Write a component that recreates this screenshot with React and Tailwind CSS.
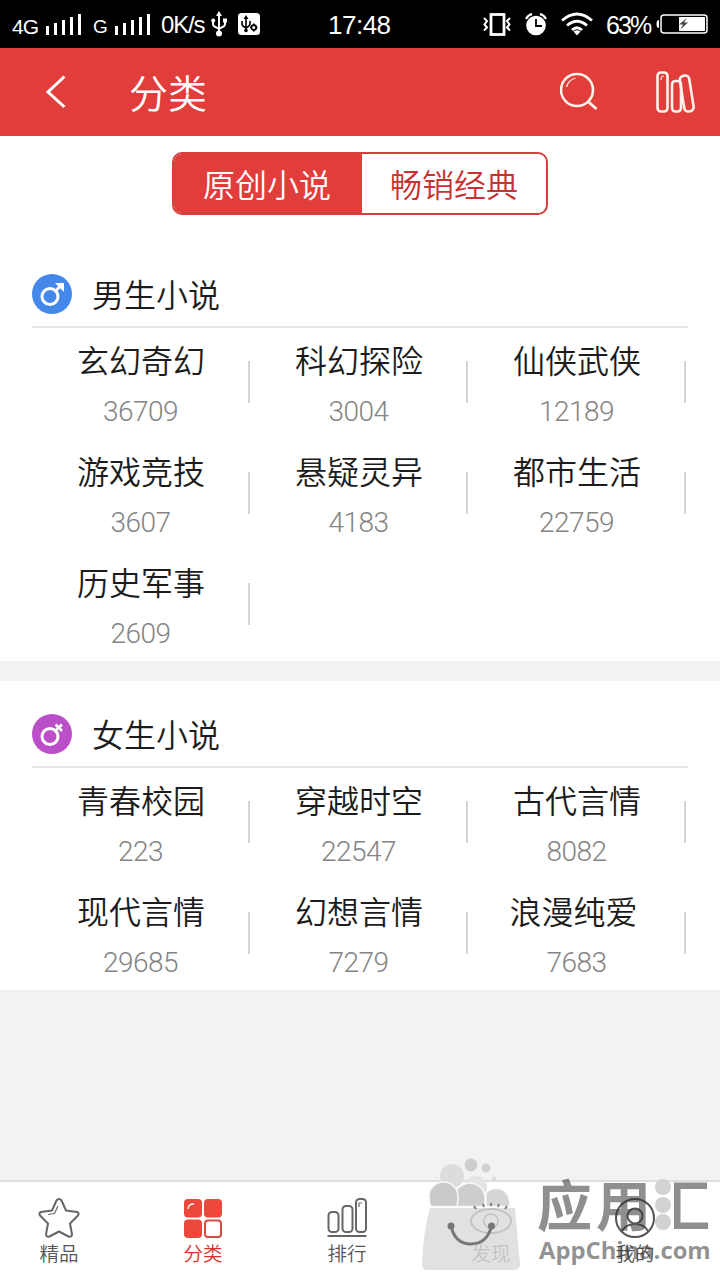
import React from "react";

const sections = [
  {
    title: "男生小说",
    gender: "male",
    items: [
      { name: "玄幻奇幻", count: 36709 },
      { name: "科幻探险", count: 3004 },
      { name: "仙侠武侠", count: 12189 },
      { name: "游戏竞技", count: 3607 },
      { name: "悬疑灵异", count: 4183 },
      { name: "都市生活", count: 22759 },
      { name: "历史军事", count: 2609 },
    ],
  },
  {
    title: "女生小说",
    gender: "female",
    items: [
      { name: "青春校园", count: 223 },
      { name: "穿越时空", count: 22547 },
      { name: "古代言情", count: 8082 },
      { name: "现代言情", count: 29685 },
      { name: "幻想言情", count: 7279 },
      { name: "浪漫纯爱 ", count: 7683 },
    ],
  },
];

const SignalBars = () => (
  <svg width="37" height="22" viewBox="0 0 37 22" fill="#fff">
    <rect x="1" y="13" width="3" height="9" />
    <rect x="9" y="10" width="3" height="12" />
    <rect x="17" y="7" width="3" height="15" />
    <rect x="25" y="4" width="3" height="18" />
    <rect x="33" y="1" width="3" height="21" />
  </svg>
);

const UsbIcon = () => (
  <svg width="16" height="26" viewBox="0 0 16 26" fill="none" stroke="#fff" strokeWidth="2">
    <path d="M8 4v18M2 10v3q0 2 2.500 3L8 18M14 9v4q0 2-2.500 3L8 18" />
    <path d="M8 0l3 5H5z" fill="#fff" stroke="none" />
    <circle cx="2.200" cy="9.500" r="2" fill="#fff" stroke="none" />
    <rect x="12" y="7.500" width="4" height="4" fill="#fff" stroke="none" />
    <circle cx="8" cy="22.500" r="3" fill="#fff" stroke="none" />
  </svg>
);

const UsbDebugIcon = () => (
  <svg width="22" height="22" viewBox="0 0 22 22" fill="none" stroke="#000" strokeWidth="1.6">
    <rect width="22" height="22" rx="3.500" fill="#fff" stroke="none" />
    <path d="M8 4v14M4 8v3q0 2 4 4M12 8v3q0 2-4 4" />
    <path d="M8 2l2.500 4h-5z" fill="#000" stroke="none" />
    <circle cx="8" cy="17.500" r="1.800" fill="#000" stroke="none" />
    <circle cx="15.800" cy="14.500" r="2.400" strokeWidth="1.800" />
    <path d="M15.800 10.500v1.500M15.800 17v1.500M12 14.500h1.500M18 14.500h1.500" />
  </svg>
);

const VibrateIcon = () => (
  <svg width="28" height="24" viewBox="0 0 28 24" fill="none" stroke="#fff">
    <rect x="8" y="2.500" width="13" height="20" strokeWidth="2.800" />
    <path d="M1 6l3 3-2.500 3.500L4 15.500l-3 3M27 6l-3 3 2.500 3.500-2.500 3 3 3" strokeWidth="2" />
  </svg>
);

const AlarmIcon = () => (
  <svg width="22" height="23" viewBox="0 0 22 23" fill="none">
    <circle cx="11" cy="12.500" r="9.800" fill="#fff" />
    <path d="M1 6q2-4 6-5M21 6q-2-4-6-5" stroke="#fff" strokeWidth="2.200" />
    <path d="M11 6v7h6" stroke="#000" strokeWidth="1.800" />
  </svg>
);

const WifiIcon = () => (
  <svg width="32" height="24" viewBox="0 0 32 24" fill="none" stroke="#fff" strokeWidth="2.800">
    <path d="M1 8.500Q16-4.500 31 8.500M6 13.500q10-8.500 20 0M11 18q5-4.500 10 0" />
    <path d="M16 23.500l-3.500-4q3.500-2.500 7 0z" fill="#fff" stroke="none" />
  </svg>
);

const BatteryIcon = () => (
  <svg width="52" height="20" viewBox="0 0 52 20">
    <path d="M3 6v8q-2.500 0-2.500-4T3 6z" fill="#fff" />
    <rect x="5" y="1" width="46" height="18" rx="3" fill="none" stroke="#fff" strokeWidth="1.500" />
    <rect x="23" y="3" width="26" height="14" fill="#fff" />
    <path d="M31 4l-8 6.500h4l-2.500 5 7.500-7h-4z" fill="#444" />
  </svg>
);

const StatusBar = () => (
  <div className="flex h-12 items-center bg-black font-['Liberation_Sans'] text-[25px] leading-none tracking-[-0.5px] text-white">
    <div className="flex flex-1 items-center pl-3">
      <span className="w-[33px] pt-1 text-[21px] tracking-[-1px]">4G</span>
      <SignalBars />
      <span className="ml-[11px] w-[21px] pt-1 text-[19px]">G</span>
      <SignalBars />
      <span className="ml-[10px] w-[50px] whitespace-nowrap pt-0.5 text-[24px] tracking-[-1.2px]">0K/s</span>
      <UsbIcon />
      <span className="ml-[11px]">
        <UsbDebugIcon />
      </span>
    </div>
    <span className="w-[64px] whitespace-nowrap pt-0.5 text-[26px]">17:48</span>
    <div className="flex flex-1 items-center justify-end pr-3">
      <VibrateIcon />
      <span className="ml-[14px]">
        <AlarmIcon />
      </span>
      <span className="ml-[14px]">
        <WifiIcon />
      </span>
      <span className="ml-[13px] w-[50px] whitespace-nowrap pt-0.5 tracking-[-1.9px]">63%</span>
      <BatteryIcon />
    </div>
  </div>
);

const Header = () => (
  <div className="flex h-22 items-center bg-[#e03d3b] pl-[46px] pr-6 text-white">
    <svg width="20" height="34" viewBox="0 0 20 34" fill="none" stroke="#fff" strokeWidth="3">
      <path d="M18.500 1.500L2 17l16.500 15" />
    </svg>
    <h1 className="ml-[63px] flex-1 pb-px text-[39px] font-[350] leading-none">分类</h1>
    <svg width="40" height="40" viewBox="0 0 40 40" fill="none" stroke="#fff3ec" strokeWidth="2.600">
      <circle cx="17" cy="18" r="16" />
      <path d="M28 29.500l8.500 7.500" strokeWidth="3" />
      <path d="M6.500 15q2-7 9-9" strokeWidth="1.300" />
    </svg>
    <svg className="ml-[56px]" width="40" height="42" viewBox="0 0 40 42" fill="none" stroke="#fff3ec" strokeWidth="2.600">
      <rect x="1.500" y="1.500" width="10" height="39" rx="3.500" />
      <rect x="16" y="10" width="9" height="30.500" rx="3.500" />
      <rect x="26" y="4.500" width="9.500" height="36" rx="4" transform="rotate(-9 31 22.500)" />
      <path d="M5 9q0-4 3-4" strokeWidth="1.200" />
    </svg>
  </div>
);

const GenderIcon = ({ gender }) => (
  <svg width="40" height="40" viewBox="0 0 40 40" fill="none" stroke="#fff" strokeWidth="3">
    <circle cx="20" cy="20" r="20" fill={gender === "male" ? "#4489ea" : "#bb4fca"} stroke="none" />
    <circle cx="18" cy="22.500" r="8" />
    {gender === "male" ? (
      <>
        <path d="M23.500 17l5-5" />
        <path d="M23 9h9v9z" fill="#fff" stroke="none" />
      </>
    ) : (
      <path d="M23 17l7-6.500M23.500 10.500l6.500 6.500" strokeWidth="2.600" />
    )}
  </svg>
);

const CategorySection = ({ title, gender, items }) => (
  <section className="bg-white">
    <div className="mx-8 flex h-[67px] items-center border-b-2 border-[#e6e6e6]">
      <GenderIcon gender={gender} />
      <h2 className="ml-5 pb-px text-[32px] font-[350] leading-none text-[#1c1c1c]">{title}</h2>
    </div>
    <div className="ml-8 grid w-[654px] grid-cols-3">
      {items.map((item) => (
        <div key={item.name} className="flex h-[111px]">
          <div className="flex-1 pt-[11px] text-center">
            <p className="whitespace-pre pl-0.5 text-[32px] font-[350] leading-10 text-[#1c1c1c]">{item.name}</p>
            <p className="mt-[17px] pl-px font-[Roboto] text-[28px] font-light leading-8 tracking-[-0.5px] text-[#848484]">
              {item.count}
            </p>
          </div>
          <div className="mt-[33px] h-[42px] w-0.5 bg-[#d4d4d4]" />
        </div>
      ))}
    </div>
  </section>
);

const StarIcon = () => (
  <svg width="42" height="40" viewBox="0 0 42 40" fill="none" stroke="#666" strokeWidth="2" strokeLinejoin="round">
    <path d="M18.500 2.500Q21-.5 23.500 2.500L28 12.500l11 1.500q3 1.500.5 4L32 25.500l2 11q-.5 3-3.500 2L21 33.500 11.500 38.500q-3 1-3.500-2l2-11L2.500 18q-2.500-2.500.5-4l11-1.500z" />
    <path d="M20 8l-3.500 7.500-6.500 1" strokeWidth="1.200" />
  </svg>
);

const GridIcon = () => (
  <svg width="38" height="39" viewBox="0 0 38 39" fill="#ee473b">
    <rect width="18" height="18.500" rx="4" />
    <rect x="20" width="18" height="18.500" rx="4" />
    <rect y="20.500" width="18" height="18.500" rx="4" />
    <rect x="21" y="21.500" width="16" height="16.500" rx="3" fill="none" stroke="#d94a42" strokeWidth="2" />
    <path d="M4 10q0-5 6-5" fill="none" stroke="#fff" strokeWidth="1.300" />
  </svg>
);

const RankIcon = () => (
  <svg width="40" height="40" viewBox="0 0 40 40" fill="none" stroke="#666" strokeWidth="2">
    <rect x="1.500" y="14" width="10" height="20" rx="3.500" />
    <rect x="15.500" y="8" width="10" height="26" rx="3.500" />
    <rect x="29" y="1" width="10" height="33" rx="3.500" />
    <path d="M.5 38h39" />
    <path d="M32 9V5h3" strokeWidth="1.200" />
  </svg>
);

const EyeIcon = () => (
  <svg width="42" height="40" viewBox="0 0 42 40" fill="none" stroke="#555" strokeWidth="2">
    <ellipse cx="21" cy="23" rx="20" ry="12" />
    <circle cx="21" cy="23" r="7" strokeWidth="1.500" />
  </svg>
);

const UserIcon = () => (
  <svg width="42" height="40" viewBox="0 0 42 40" fill="none" stroke="#555" strokeWidth="2">
    <circle cx="21" cy="20" r="19" />
    <circle cx="21" cy="18" r="7.500" />
    <path d="M8 33q4-7 13-7t13 7" />
  </svg>
);

const tabs = [
  { label: "精品", icon: StarIcon },
  { label: "分类", icon: GridIcon, active: true },
  { label: "排行", icon: RankIcon },
  { label: "发现", icon: EyeIcon },
  { label: "我的", icon: UserIcon },
];

const TabBar = () => (
  <nav className="h-[100px] border-t-2 border-[#dedede] bg-white">
    <div className="-ml-[13px] flex w-[720px]">
      {tabs.map(({ label, icon: Icon, active }) => (
        <div key={label} className="flex w-36 flex-col items-center pt-4">
          <div className="flex h-10 items-center">
            <Icon />
          </div>
          <span
            className={`mt-[3px] text-[19.5px] font-[350] leading-6 ${active ? "text-[#d9302c]" : "text-[#555]"}`}
          >
            {label}
          </span>
        </div>
      ))}
    </div>
  </nav>
);

// Store badge floating over the bottom right corner
const StoreBadge = () => (
  <div className="pointer-events-none absolute right-0 bottom-0 h-[130px] w-[310px]">
    <svg className="absolute inset-0" width="310" height="130" viewBox="0 0 310 130">
      <circle cx="42" cy="26" r="12" fill="#dcdcdc" />
      <circle cx="61" cy="15" r="6.500" fill="#cdcdcd" />
      <circle cx="76" cy="18" r="4.500" fill="#d2d2d2" />
      <circle cx="84" cy="29" r="2" fill="#d8d8d8" />
      <circle cx="66" cy="37" r="11" fill="#e4e4e4" />
      <g stroke="#f8f8f8" strokeWidth="1.500">
        <path d="M76 56.500V43q4-5 12-4.500 12 2 12 18z" fill="#d6d6d6" />
        <path d="M47 56.500V39q6-6 14-6 13 2 14 15v8.500z" fill="#cdcdcd" />
        <path d="M21 56.500q-2-4-2-10a14.500 14.500 0 0 1 29 0q0 6-1 10z" fill="#cacaca" />
      </g>
      <path d="M20 58h85l5 56q0 6-6 6H18q-6 0-6-6 1-30 8-56z" fill="#dbdbdb" fillOpacity="0.82" />
      <path d="M41 76q4 18 20 18t20.500-18" fill="none" stroke="#777" strokeWidth="3" />
      <circle cx="41" cy="76" r="3.500" fill="#777" />
      <circle cx="81.500" cy="76" r="3.500" fill="#777" />
      <path d="M64 56l2 3M73 54l1 3M81 53v3M89 54l-1 3M97 56l-2 3" stroke="#777" strokeWidth="1.800" />
      <g fill="#d2d2d2">
        <circle cx="253" cy="37" r="8" />
        <circle cx="253" cy="55" r="8" />
        <circle cx="253" cy="72" r="8" />
      </g>
    </svg>
    <div className="absolute top-[21px] left-[127px] flex text-[55px] font-bold leading-[62px] text-[#333]/55">
      <span className="w-[59px]">应</span>
      <span className="w-[59px]">用</span>
      <span className="bg-[linear-gradient(90deg,transparent_34%,#8f8f8f_34%)] bg-clip-text text-transparent">汇</span>
    </div>
    <p className="absolute top-[88px] left-[129px] font-['Open_Sans'] text-[23.8px] font-bold leading-6 text-[#333]/55">
      AppChina.com
    </p>
  </div>
);

const App = () => {
  return (
    <div className="relative flex h-[1280px] w-[720px] flex-col overflow-hidden bg-[#f2f2f2] font-['Noto_Sans_CJK_SC',sans-serif]">
      <StatusBar />
      <Header />
      <div className="flex h-[125px] justify-center bg-white pt-4">
        <div className="flex h-[63px] w-[376px] overflow-hidden rounded-[10px] border-2 border-[#d5403f] bg-white text-[32px] font-[350] leading-[57px]">
          <button className="w-[188px] bg-[#e03d3b] pr-0.5 text-white">原创小说</button>
          <button className="flex-1 text-[#c8322f]">畅销经典</button>
        </div>
      </div>
      <CategorySection {...sections[0]} />
      <div className="mt-5 bg-white pt-5">
        <CategorySection {...sections[1]} />
      </div>
      <div className="flex-1" />
      <TabBar />
      <StoreBadge />
    </div>
  );
};

export default App;
